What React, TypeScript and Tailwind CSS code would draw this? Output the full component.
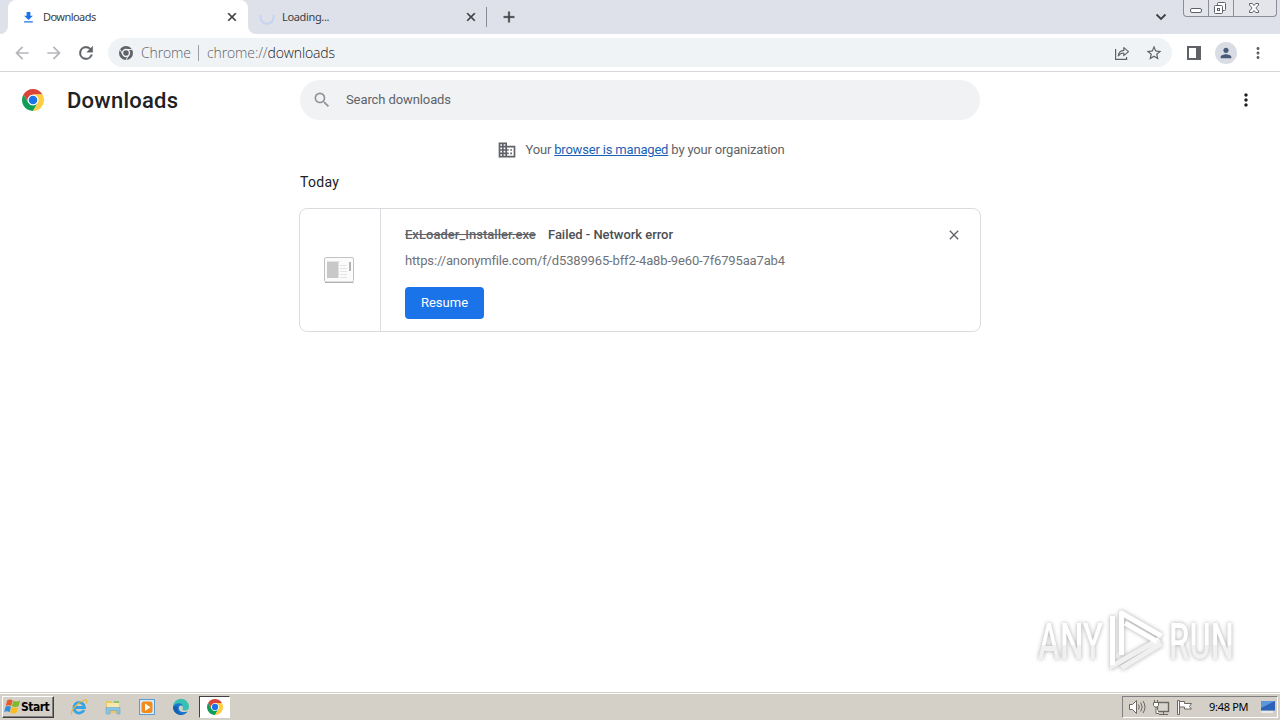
import type { ReactNode } from "react";

/* ---------- Icons ---------- */

type IconProps = { className?: string };

function ChromeLogo({ className = "" }: IconProps) {
  return (
    <svg viewBox="2 2 44 44" className={className}>
      <circle cx="24" cy="24" r="21" fill="#fff" />
      <path fill="#db4437" d="M24 13h19.05A22 22 0 0 0 4.95 13l9.52 16.5A11 11 0 0 1 24 13z" />
      <path fill="#0f9d58" d="M14.47 29.5 4.95 13A22 22 0 0 0 24 46l9.53-16.5a11 11 0 0 1-19.06 0z" />
      <path fill="#ffcd40" d="M33.53 29.5 24 46a22 22 0 0 0 19.05-33H24a11 11 0 0 1 9.53 16.5z" />
      <circle cx="24" cy="24" r="8.6" fill="#1a73e8" />
    </svg>
  );
}

function ChromeMono({ className = "" }: IconProps) {
  return (
    <svg viewBox="2 2 44 44" className={className}>
      <circle cx="24" cy="24" r="22" fill="#5f6368" />
      <circle cx="24" cy="24" r="11" fill="none" stroke="#f1f3f4" strokeWidth="4.500" />
      <path d="M24 13h19M14.5 29.5 5 13M33.5 29.5 24 46" stroke="#f1f3f4" strokeWidth="3" />
    </svg>
  );
}

// Material glyphs on a 24px grid
function Glyph({ d, className = "" }: { d: string; className?: string }) {
  return (
    <svg viewBox="0 0 24 24" fill="currentColor" className={className}>
      <path d={d} />
    </svg>
  );
}

const glyphs = {
  download: "M19 9h-4V3H9v6H5l7 7 7-7zM5 18v2h14v-2H5z",
  back: "M20 11H7.83l5.59-5.59L12 4l-8 8 8 8 1.41-1.41L7.83 13H20v-2z",
  forward: "M12 4l-1.41 1.41L16.17 11H4v2h12.17l-5.58 5.59L12 20l8-8z",
  reload:
    "M17.65 6.35A7.96 7.96 0 0 0 12 4a8 8 0 1 0 7.73 10h-2.08A6 6 0 1 1 12 6c1.66 0 3.14.69 4.22 1.78L13 11h7V4l-2.35 2.35z",
  close: "M19 6.41 17.59 5 12 10.59 6.41 5 5 6.41 10.59 12 5 17.59 6.41 19 12 13.41 17.59 19 19 17.59 13.41 12z",
  add: "M19 13h-6v6h-2v-6H5v-2h6V5h2v6h6v2z",
  search:
    "M15.5 14h-.79l-.28-.27A6.47 6.47 0 0 0 16 9.5 6.5 6.5 0 1 0 9.5 16c1.61 0 3.09-.59 4.23-1.57l.27.28v.79l5 4.99L20.49 19l-4.99-5zm-6 0C7.01 14 5 11.99 5 9.5S7.01 5 9.5 5 14 7.01 14 9.5 11.99 14 9.5 14z",
  more: "M12 8c1.1 0 2-.9 2-2s-.9-2-2-2-2 .9-2 2 .9 2 2 2zm0 2c-1.1 0-2 .9-2 2s.9 2 2 2 2-.9 2-2-.9-2-2-2zm0 6c-1.1 0-2 .9-2 2s.9 2 2 2 2-.9 2-2-.9-2-2-2z",
  star: "M22 9.24l-7.19-.62L12 2 9.19 8.63 2 9.24l5.46 4.73L5.82 21 12 17.27 18.18 21l-1.63-7.03L22 9.24zM12 15.4l-3.76 2.27 1-4.28-3.32-2.88 4.38-.38L12 6.1l1.71 4.04 4.38.38-3.32 2.88 1 4.28L12 15.4z",
  person: "M12 12c2.21 0 4-1.79 4-4s-1.79-4-4-4-4 1.79-4 4 1.79 4 4 4zm0 2c-2.67 0-8 1.34-8 4v2h16v-2c0-2.66-5.33-4-8-4z",
  domain:
    "M12 7V3H2v18h20V7H12zM6 19H4v-2h2v2zm0-4H4v-2h2v2zm0-4H4V9h2v2zm0-4H4V5h2v2zm4 12H8v-2h2v2zm0-4H8v-2h2v2zm0-4H8V9h2v2zm0-4H8V5h2v2zm10 12h-8v-2h2v-2h-2v-2h2v-2h-2V9h8v10zm-2-8h-2v2h2v-2zm0 4h-2v2h2v-2z",
};

function ShareIcon() {
  return (
    <svg viewBox="0 0 16 16" className="h-4 w-4" fill="none" stroke="#5f6368" strokeWidth="1.2">
      <path d="M1.600 4v10.400h11v-2.400" />
      <path d="M4.300 10.800c.4-3.400 2.300-5.200 5.500-5.400V2.600l4.700 4-4.700 4V8c-2.400 0-4.200.9-5.500 2.800z" strokeLinejoin="round" />
    </svg>
  );
}

function TabFoot({ className = "" }: IconProps) {
  return (
    <svg viewBox="0 0 8 8" className={className}>
      <path d="M8 0v8H0a8 8 0 0 0 8-8z" fill="#fff" />
    </svg>
  );
}

function ExeIcon() {
  return (
    <svg viewBox="0 0 32 28" className="h-7 w-8">
      <rect x="1.500" y="1.500" width="29" height="24.500" rx="1.500" fill="#fbfbfb" stroke="#c2c2c2" />
      <path d="M2 26.500h28.500" stroke="#b0b0b0" />
      <rect x="4" y="6" width="11.500" height="16" fill="#c8c8c8" />
      <path d="M4 5.500h13M17 9.500h7M17 12.500h7M17 15.500h7M17 18.500h7M17 21.500h7" stroke="#e4e4e4" />
      <path d="M27 6v9" stroke="#a0a0a0" strokeWidth="1.600" />
    </svg>
  );
}

/* ---------- Browser chrome ---------- */

function WindowButtons() {
  return (
    <div className="absolute top-0 right-[3px] flex h-[17px] w-[94px] overflow-hidden rounded-b border border-t-0 border-[#8b8e98] bg-[#e3e5ea]">
      <svg viewBox="0 0 92 16" className="h-4 w-[92px]" fill="none" stroke="#5d616b">
        <path d="M24.500 0v16M49.500 0v16" stroke="#8b8e98" />
        <rect x="6.500" y="8.500" width="11" height="4" rx="1.500" fill="#fff" />
        <rect x="33.500" y="2.500" width="8" height="8" rx="1" fill="#fff" />
        <rect x="30.500" y="5.500" width="8" height="8" rx="1" fill="#fff" />
        <rect x="33.500" y="8.500" width="2" height="2" />
        <path
          d="M65.500 3.500h2.800l1.700 2 1.700-2h2.800v1.600L71.800 8l2.700 2.900v1.600h-2.800l-1.700-2-1.700 2h-2.800v-1.600L68.200 8l-2.700-2.900z"
          fill="#fff"
        />
      </svg>
    </div>
  );
}

function TabStrip() {
  return (
    <div className="relative flex h-[34px] bg-[#dee1e9] pl-2 font-['Noto_Sans',sans-serif] text-[#3c4043]">
      <div className="relative flex h-full w-60 items-center rounded-t-lg bg-white pr-[9px] pl-[13px]">
        <TabFoot className="absolute bottom-0 -left-2 h-2 w-2" />
        <TabFoot className="absolute -right-2 bottom-0 h-2 w-2 -scale-x-100" />
        <Glyph d={glyphs.download} className="h-[15px] w-[15px] text-[#1a73e8]" />
        <span className="ml-[7px] flex-1 text-[11px] tracking-[-0.55px]">Downloads</span>
        <Glyph d={glyphs.close} className="h-[14px] w-[14px] stroke-current" />
      </div>
      <div className="flex h-full w-[238px] items-center pr-2 pl-[11px]">
        <svg viewBox="0 0 16 16" className="h-4 w-4" fill="none" strokeWidth="1.800">
          <path d="M14.200 6A6.500 6.500 0 1 1 2 6" stroke="#c3d3f0" />
        </svg>
        <span className="ml-[7px] flex-1 text-[11px] tracking-[-0.35px]">Loading...</span>
        <Glyph d={glyphs.close} className="h-[14px] w-[14px] stroke-current" />
      </div>
      <div className="mt-[7px] h-5 w-px bg-[#868b94]" />
      <Glyph d={glyphs.add} className="mt-2 ml-[13px] h-[18px] w-[18px] stroke-current stroke-[0.5]" />
      <svg viewBox="0 0 12 8" className="absolute top-[13px] right-[113px] h-2 w-3" fill="none">
        <path d="M1.500 1.500 6 6l4.500-4.500" stroke="#3c4043" strokeWidth="1.800" />
      </svg>
      <WindowButtons />
    </div>
  );
}

function Toolbar() {
  return (
    <div className="flex h-[38px] items-center border-b border-[#d5d7da] bg-white pl-3 text-[#5f6368]">
      <Glyph d={glyphs.back} className="h-5 w-5 text-[#b4b6b9]" />
      <Glyph d={glyphs.forward} className="ml-3 h-5 w-5 text-[#b4b6b9]" />
      <Glyph d={glyphs.reload} className="ml-3 h-5 w-5 stroke-current stroke-[0.5]" />
      <div className="ml-3 flex h-[29px] w-[1064px] items-center rounded-full bg-[#f0f3f5] pl-[11px] font-['Open_Sans',sans-serif] text-sm font-light whitespace-nowrap">
        <ChromeMono className="h-[14px] w-[14px]" />
        <span className="ml-2 w-[49px] tracking-[-0.15px]">Chrome</span>
        <span className="ml-[8px] h-4 w-px bg-[#9aa0a6]" />
        <span className="ml-2 flex-1 tracking-[-0.12px]">
          chrome://<span className="text-[#202124]">downloads</span>
        </span>
        <ShareIcon />
        <Glyph d={glyphs.star} className="mr-[9px] ml-[15px] h-[18px] w-[18px]" />
      </div>
      <svg viewBox="0 0 14 14" className="ml-[15px] h-[14px] w-[14px]">
        <path d="M0 0h14v14H0zM2 2v10h7V2z" fill="#5f6368" fillRule="evenodd" />
      </svg>
      <div className="ml-[14px] flex h-[22px] w-[22px] items-center justify-center rounded-full bg-[#dadce4]">
        <Glyph d={glyphs.person} className="h-4 w-4 text-[#4a5a7a]" />
      </div>
      <Glyph d={glyphs.more} className="ml-[12px] h-[18px] w-[18px]" />
    </div>
  );
}

/* ---------- Downloads page ---------- */

function PageHeader() {
  return (
    <header className="flex h-14 items-center pl-[22px]">
      <ChromeLogo className="h-[22px] w-[22px]" />
      <h1 className="ml-[23px] w-[233px] text-[22px] font-medium tracking-[0.25px] text-[#202124]">Downloads</h1>
      <div className="flex h-10 w-[680px] items-center rounded-full bg-[#f0f2f4] pl-3 text-[13px] text-[#5f6368]">
        <Glyph d={glyphs.search} className="h-5 w-5 text-[#909499]" />
        <span className="ml-[14px] tracking-[-0.1px]">Search downloads</span>
      </div>
      <Glyph d={glyphs.more} className="ml-64 h-5 w-5 text-[#202124]" />
    </header>
  );
}

function DownloadCard() {
  return (
    <article className="flex h-[124px] w-[682px] rounded-lg border border-[#dadce0]">
      <div className="flex w-[81px] items-center justify-center border-r border-[#dadce0] pr-[3px]">
        <ExeIcon />
      </div>
      <div className="flex-1 pt-[17px] pl-6 text-[13px] leading-[18px] text-[#5f6368]">
        <div className="flex items-center font-medium whitespace-nowrap">
          <span className="w-[143px] tracking-[0.03px] line-through">ExLoader_Installer.exe</span>
          <span className="flex-1 tracking-[-0.04px] text-[#4b4e52]">Failed - Network error</span>
          <Glyph d={glyphs.close} className="mr-[18px] h-4 w-4" />
        </div>
        <p className="mt-2 tracking-[-0.15px] text-[#6f7378]">
          https://anonymfile.com/f/d5389965-bff2-4a8b-9e60-7f6795aa7ab4
        </p>
        <button className="mt-[17px] h-8 w-[79px] rounded bg-[#1a73e8] text-[13px] text-white">Resume</button>
      </div>
    </article>
  );
}

function Watermark() {
  const word =
    "block w-max origin-left bg-gradient-to-b from-white from-55% to-[#f1f1f1] to-55% bg-clip-text text-[50px] leading-[60px] font-medium text-transparent";
  return (
    <div className="absolute right-[42px] bottom-[16px] flex h-[68px] w-[200px] items-center justify-between drop-shadow-[0_0_2px_#aaa]">
      <div className="w-[66px]">
        <span className={`scale-x-[0.66] ${word}`}>ANY</span>
      </div>
      <svg viewBox="1105 605 64 70" className="absolute top-[-4px] left-[66px] h-[70px] w-16" fill="none" strokeWidth="5">
        <path d="M1122.500 669l40-24.500M1113.500 662v5l47-27" stroke="#f0f0f0" />
        <path d="M1113.500 617v49M1122.500 656v-42l40 23M1126 624l32 18.500" stroke="#fff" strokeLinejoin="round" />
      </svg>
      <div className="w-[69px]">
        <span className={`scale-x-[0.65] ${word}`}>RUN</span>
      </div>
    </div>
  );
}

/* ---------- Taskbar ---------- */

function WindowsFlag() {
  return (
    <svg viewBox="0 0 16 16" className="h-[17px] w-[17px] shrink-0">
      <path d="M3 2C4.700 1 6.500 1.100 8.200 2.200L6.900 7.400C5.200 6.500 3.500 6.500 1.700 7.300z" fill="#e9592b" />
      <path d="M8.800 2.600c1.900.9 4 .9 6.400-.2l-1.600 5.400c-2.100 1-4.100.8-6.100-.1z" fill="#7db928" />
      <path d="M1.500 8c1.700-.8 3.400-.7 5.100.2L5.200 13.300C3.600 12.300 2 12.200.2 13.100z" fill="#2f8fdc" />
      <path d="M7.300 8.500c2 .9 4 1 6.100.1l-1.600 5.300c-2.100 1-4.100.9-6-.2z" fill="#fbbc1c" />
    </svg>
  );
}

function IeIcon() {
  return (
    <svg viewBox="0 0 18 18" className="h-[18px] w-[18px]" fill="none">
      <path d="M14 12a5.300 5.300 0 1 1 .5-2.500H5" stroke="#35a3e4" strokeWidth="2.800" />
      <path d="M2 16.500C-.5 14 7 4 15 2c3-.6 2 2 1 3.500" stroke="#e8b73a" strokeWidth="1.200" />
    </svg>
  );
}

function ExplorerIcon() {
  return (
    <svg viewBox="0 0 18 18" className="h-[18px] w-[18px]">
      <path d="M2 3h5l1 1.500h7V15H2z" fill="#e8c766" />
      <path d="M3 5h12v6H3z" fill="#f7e9ae" />
      <path d="M10 3h5v2h-5z" fill="#8ec46a" />
      <path d="M2 9.500h14V16h-3v-3.500H6V16H2z" fill="#8ac3e3" stroke="#6aa6cb" strokeWidth=".6" />
    </svg>
  );
}

function MediaIcon() {
  return (
    <svg viewBox="0 0 18 18" className="h-[18px] w-[18px]">
      <rect x="1.500" y="1.500" width="15" height="15" fill="#d9ebf8" stroke="#5b9dd0" />
      <rect x="3.500" y="3.500" width="11" height="11.500" rx="2.500" fill="#f28a1c" />
      <path d="M7 5.500v7.500l5.500-3.700z" fill="#fff" />
    </svg>
  );
}

function EdgeIcon() {
  return (
    <svg viewBox="0 0 18 18" className="h-[18px] w-[18px]">
      <path d="M1 9a8 8 0 0 1 16-.5c.2 3-2 4-4.500 4-1.500 0-2.300-.7-1.800-1.500.8-1.300-.2-3.500-2.500-3.500C5 7.500 1.500 9 1 9z" fill="#38c1b0" />
      <path d="M1 9C2.500 5 9 4 11 7.500 7.500 6.500 6 9 7 11.500c1.200 3 5.500 3.200 8.700 1.700A8 8 0 0 1 1 9z" fill="#1b76cf" />
      <path d="M1 9a8 8 0 0 0 9.500 7.800C6 16 4.500 12 6.500 9 4 8 1.500 8 1 9z" fill="#165dac" />
    </svg>
  );
}

function TrayIcons() {
  return (
    <svg viewBox="0 0 66 18" className="h-[18px] w-[66px]" fill="none" stroke="#6b6862">
      <path d="M1.500 6.500h3l4-4v13l-4-4h-3z" fill="#fff" />
      <path d="M10.500 6.500q1.500 2.500 0 5M12.700 4.500q3 4.500 0 9M15 3q4 6 0 12" />
      <rect x="29.500" y="4.500" width="11" height="9" fill="#d8d5cc" strokeWidth="1.400" />
      <path d="M31 16.500h9M35.500 13.500v3M26.500 2v3M29.500 2v3" />
      <path d="M25.500 4.500h5v3l-1.500 1.500h-2l-1.500-1.500zM28 9v6.500h3" fill="#fff" />
      <path d="M49.500 2.500h2v14h-2z" fill="#fff" />
      <path d="M51.500 3.500h5v2h7l-2 3 2 2.500h-7v-2h-5z" fill="#fff" />
    </svg>
  );
}

function TaskItem({ children }: { children: ReactNode }) {
  return <div className="flex w-[34px] justify-center">{children}</div>;
}

function Taskbar() {
  return (
    <footer className="flex h-[28px] shrink-0 items-center border-t border-[#d4d0c8] bg-[#d4d0c8] pl-0.5 font-['DejaVu_Sans_Condensed','DejaVu_Sans',sans-serif] shadow-[inset_0_1px_0_#fff]">
      <button className="flex h-[22px] w-[52px] items-center border border-t-white border-r-[#404040] border-b-[#404040] border-l-white pl-px text-[12px] font-bold tracking-[-0.5px] text-black shadow-[inset_-1px_-1px_0_#808080]">
        <WindowsFlag />
        Start
      </button>
      <div className="ml-2 flex">
        <TaskItem><IeIcon /></TaskItem>
        <TaskItem><ExplorerIcon /></TaskItem>
        <TaskItem><MediaIcon /></TaskItem>
        <TaskItem><EdgeIcon /></TaskItem>
      </div>
      <div className="ml-[1px] flex h-[22px] w-[31px] items-center justify-center border border-t-[#404040] border-r-white border-b-white border-l-[#404040] bg-white">
        <ChromeLogo className="h-4 w-4" />
      </div>
      <div className="mr-0.5 ml-auto flex h-[22px] w-[156px] items-center border border-t-[#808080] border-r-white border-b-white border-l-[#808080] pl-[5px] text-[11px] whitespace-nowrap text-black">
        <TrayIcons />
        <span className="mt-px ml-[15px] w-[51px] font-['Noto_Sans'] tracking-[-0.3px]">9:48 PM</span>
        <svg viewBox="0 0 16 14" className="h-[14px] w-4">
          <path d="M1 1h14v9.500H1z" fill="#2c62b8" />
          <path d="M1 1h14L1 8z" fill="#5c96dd" />
          <path d="M1 12h12" stroke="#eef3fa" strokeWidth="1.500" />
        </svg>
      </div>
    </footer>
  );
}

export default function App() {
  return (
    <div className="flex h-[720px] w-[1280px] flex-col overflow-hidden bg-white font-['Roboto',sans-serif]">
      <TabStrip />
      <Toolbar />
      <main className="relative flex-1">
        <PageHeader />
        <div className="mt-[12px] flex h-5 items-center justify-center pl-0.5 text-[13px] text-[#5f6368]">
          <Glyph d={glyphs.domain} className="mr-[8px] h-5 w-5" />
          <span className="tracking-[-0.18px]">
            Your <a className="text-[#1a5fb8] underline">browser is managed</a> by your organization
          </span>
        </div>
        <section className="ml-[299px]">
          <h2 className="mt-[12px] mb-[16px] pl-px text-sm leading-5 tracking-[0.3px] text-[#202124]">Today</h2>
          <DownloadCard />
        </section>
        <Watermark />
      </main>
      <Taskbar />
    </div>
  );
}
